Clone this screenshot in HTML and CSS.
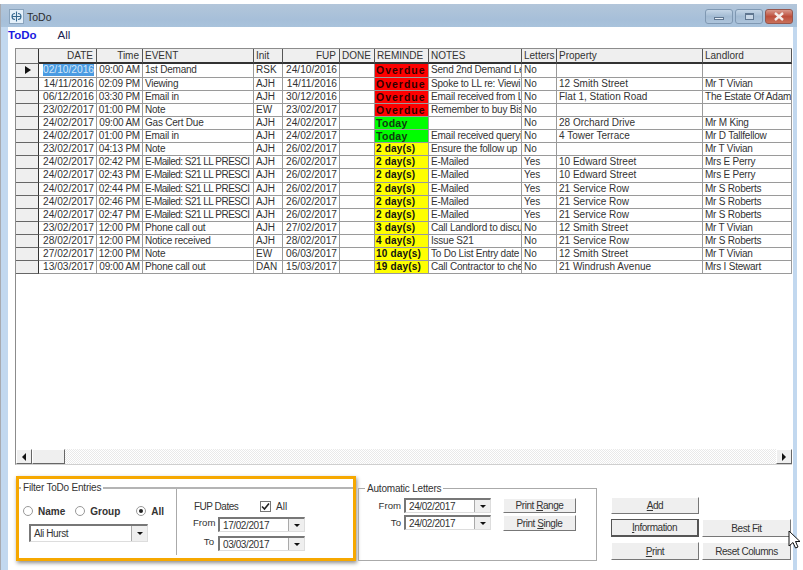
FILE: index.html
```html
<!DOCTYPE html>
<html lang="en">
<head>
  <meta charset="UTF-8" />
  <title>ToDo</title>
  <link rel="stylesheet" href="styles.css">
</head>
<body>
  <div class="window">
    <div class="titlebar">
      <div class="app-icon">
        <svg width="13" height="13" viewBox="0 0 13 13"><path d="M6.5 1.5v10M5 3.5a3 3 0 0 0 0 6M8 3.5a3 3 0 0 1 0 6M2 6.5h9" fill="none" stroke="#35688f" stroke-width="1.1"/></svg>
      </div>
      <span class="title">ToDo</span>
      <div class="win-buttons">
        <div class="win-btn"><span class="glyph-min"></span></div>
        <div class="win-btn"><span class="glyph-max"></span></div>
        <div class="win-btn close">
          <svg width="12" height="9" viewBox="0 0 12 9"><path d="M2 1l8 7M10 1 2 8" fill="none" stroke="#f4ece9" stroke-width="2.4"/></svg>
        </div>
      </div>
    </div>

    <div class="client">
      <div class="menu">
        <span class="menu-item active">ToDo</span>
        <span class="menu-item">All</span>
      </div>

      <div class="grid-wrap">
        <div class="grid" id="grid"></div>
        <div class="grid-spacer"></div>
        <div class="hscroll">
          <div class="sb-btn"><span class="arrow-left"></span></div>
          <div class="sb-thumb"></div>
          <div class="sb-track"></div>
          <div class="sb-btn"><span class="arrow-right"></span></div>
        </div>
      </div>

      <div class="bottom">
        <div class="filter-box">
          <fieldset class="group filter-group">
            <legend>Filter ToDo Entries</legend>
            <div class="filter-left">
              <div class="radios">
                <span class="radio"></span><b class="radio-label name">Name</b>
                <span class="radio"></span><b class="radio-label group-label">Group</b>
                <span class="radio checked"></span><b class="radio-label">All</b>
              </div>
              <div class="combo person"><span class="combo-text">Ali Hurst</span><span class="combo-btn"><i></i></span></div>
            </div>
            <div class="filter-right">
              <div class="fup-head">
                <span>FUP Dates</span>
                <span class="check">
                  <svg width="11" height="11" viewBox="0 0 11 11"><path d="M2 5.5 4.5 8 9 2.5" fill="none" stroke="#222" stroke-width="1.6"/></svg>
                </span>
                <span>All</span>
              </div>
              <div class="date-row"><label>From</label><div class="combo date"><span class="combo-text">17/02/2017</span><span class="combo-btn"><i></i></span></div></div>
              <div class="date-row"><label>To</label><div class="combo date"><span class="combo-text">03/03/2017</span><span class="combo-btn"><i></i></span></div></div>
            </div>
          </fieldset>
        </div>

        <fieldset class="group letters">
          <legend>Automatic Letters</legend>
          <div class="letters-rows">
            <div class="date-row"><label>From</label><div class="combo date"><span class="combo-text">24/02/2017</span><span class="combo-btn"><i></i></span></div></div>
            <button class="btn">Print <u>R</u>ange</button>
            <div class="date-row"><label>To</label><div class="combo date"><span class="combo-text">24/02/2017</span><span class="combo-btn"><i></i></span></div></div>
            <button class="btn">Print <u>S</u>ingle</button>
          </div>
        </fieldset>

        <div class="actions">
          <button class="btn"><u>A</u>dd</button>
          <span></span>
          <button class="btn default"><u>I</u>nformation</button>
          <button class="btn">Best Fit</button>
          <button class="btn"><u>P</u>rint</button>
          <button class="btn">Reset Columns</button>
        </div>
      </div>
    </div>
  </div>

  <svg class="cursor" width="13" height="20" viewBox="0 0 13 20"><path d="M1 1v15l4-3.5 2.5 5.5 2.5-1-2.500-5.500h4.500z" fill="#fff" stroke="#111" stroke-width="1"/></svg>

  <script>
    const rows = [
      ['02/10/2016','09:00 AM','1st Demand','RSK','24/10/2016','Overdue','r','Send 2nd Demand Le','No','',''],
      ['14/11/2016','02:09 PM','Viewing','AJH','14/11/2016','Overdue','r','Spoke to LL re: Viewi','No','12 Smith Street','Mr T Vivian'],
      ['06/12/2016','03:30 PM','Email in','AJH','30/12/2016','Overdue','r','Email received from L','No','Flat 1, Station Road','The Estate Of Adam'],
      ['23/02/2017','01:00 PM','Note','EW','23/02/2017','Overdue','r','Remember to buy Bis','No','',''],
      ['24/02/2017','09:00 AM','Gas Cert Due','AJH','24/02/2017','Today','g','','No','28 Orchard Drive','Mr M King'],
      ['24/02/2017','01:00 PM','Email in','AJH','24/02/2017','Today','g','Email received queryi','No','4 Tower Terrace','Mr D Tallfellow'],
      ['23/02/2017','04:13 PM','Note','AJH','26/02/2017','2 day(s)','y','Ensure the follow up','No','','Mr T Vivian'],
      ['24/02/2017','02:42 PM','E-Mailed: S21 LL PRESCI','AJH','26/02/2017','2 day(s)','y','E-Mailed','Yes','10 Edward Street','Mrs E Perry'],
      ['24/02/2017','02:43 PM','E-Mailed: S21 LL PRESCI','AJH','26/02/2017','2 day(s)','y','E-Mailed','Yes','10 Edward Street','Mrs E Perry'],
      ['24/02/2017','02:44 PM','E-Mailed: S21 LL PRESCI','AJH','26/02/2017','2 day(s)','y','E-Mailed','Yes','21 Service Row','Mr S Roberts'],
      ['24/02/2017','02:46 PM','E-Mailed: S21 LL PRESCI','AJH','26/02/2017','2 day(s)','y','E-Mailed','Yes','21 Service Row','Mr S Roberts'],
      ['24/02/2017','02:47 PM','E-Mailed: S21 LL PRESCI','AJH','26/02/2017','2 day(s)','y','E-Mailed','Yes','21 Service Row','Mr S Roberts'],
      ['23/02/2017','12:00 PM','Phone call out','AJH','27/02/2017','3 day(s)','y','Call Landlord to discu','No','12 Smith Street','Mr T Vivian'],
      ['28/02/2017','12:00 PM','Notice received','AJH','28/02/2017','4 day(s)','y','Issue S21','No','21 Service Row','Mr S Roberts'],
      ['27/02/2017','12:00 PM','Note','EW','06/03/2017','10 day(s)','y','To Do List Entry date','No','12 Smith Street','Mr T Vivian'],
      ['13/03/2017','09:00 AM','Phone call out','DAN','15/03/2017','19 day(s)','y','Call Contractor to che','No','21 Windrush Avenue','Mrs I Stewart']
    ];
    const headers = ['', 'DATE', 'Time', 'EVENT', 'Init', 'FUP', 'DONE', 'REMINDE', 'NOTES', 'Letters', 'Property', 'Landlord'];

    function cell(text, cls) {
      return `<div class="cell ${cls}"><span>${text}</span></div>`;
    }

    let html = '';
    headers.forEach((h, i) => {
      const right = (i === 1 || i === 2 || i === 5) ? ' right' : '';
      html += cell(h, 'head' + right + (i === 0 ? ' ind' : ''));
    });
    rows.forEach((r, i) => {
      html += `<div class="cell ind">${i === 0 ? '<span class="pointer"></span>' : ''}</div>`;
      html += cell(r[0], 'date right' + (i === 0 ? ' selected' : ''));
      html += cell(r[1], 'time right');
      html += cell(r[2], 'event' + (r[2].startsWith('E-Mailed') ? ' tight' : ''));
      html += cell(r[3], '');
      html += cell(r[4], 'date right');
      html += cell('', '');
      html += cell(r[5], 'remind ' + r[6]);
      html += cell(r[7], 'notes');
      html += cell(r[8], '');
      html += cell(r[9], '');
      html += cell(r[10], 'landlord');
    });
    document.getElementById('grid').innerHTML = html;
  </script>
</body>
</html>
```

FILE: styles.css
```css
html, body {
  margin: 0;
  padding: 0;
  background: #fff;
}
body {
  font-family: "Liberation Sans", Arial, sans-serif;
  font-size: 10px;
  color: #333;
  width: 803px;
  height: 570px;
  overflow: hidden;
  position: relative;
}
.window {
  margin-top: 4px;
  width: 797px;
  height: 566px;
  display: flex;
  flex-direction: column;
  background: #c2d8ef;
  border-left: 1px solid #a8aab0;
  box-sizing: border-box;
}
.titlebar {
  height: 23px;
  display: flex;
  align-items: center;
  padding: 2px 0 0 8px;
  box-sizing: border-box;
  background: linear-gradient(#b3c6da, #a6bfd9 70%, #a9c3dc);
  flex: none;
}
.app-icon {
  width: 15px;
  height: 15px;
  box-sizing: border-box;
  background: #e4f0fa;
  border: 1px solid #8aa4bd;
  margin-right: 3px;
  display: flex;
}
.title {
  font-size: 10.5px;
  color: #2c2c2c;
}
.win-buttons {
  margin-left: auto;
  margin-right: 4px;
  display: flex;
  gap: 2px;
}
.win-btn {
  width: 28px;
  height: 15px;
  box-sizing: border-box;
  border: 1px solid #7f98b2;
  border-radius: 3px;
  background: linear-gradient(#c5d6e7, #a3bbd3 50%, #adc4db);
  display: flex;
  align-items: center;
  justify-content: center;
}
.win-btn.close {
  background: linear-gradient(#d8998c, #bd4f3c 50%, #c8705a);
  border-color: #96554b;
}
.glyph-min {
  width: 10px;
  height: 3px;
  margin-top: 4px;
  background: #e6eef6;
  border: 1px solid #5f7690;
  box-sizing: border-box;
}
.glyph-max {
  width: 9px;
  height: 7px;
  border: 1px solid #5f7690;
  border-top-width: 2px;
  box-sizing: border-box;
  background: #c9d8e8;
}
.client {
  flex: 1;
  margin: 0 4px 0 7px;
  background: #fff;
  display: flex;
  flex-direction: column;
}
.menu {
  height: 21px;
  padding-bottom: 6px;
  box-sizing: border-box;
  display: flex;
  align-items: center;
  gap: 21px;
  font-size: 11.5px;
}
.menu-item {
  color: #222250;
}
.menu-item.active {
  color: #1a1ae0;
  font-weight: bold;
}
.grid-wrap {
  margin: 0 1px 0 7px;
  height: 417px;
  display: flex;
  flex-direction: column;
  background: #fff;
  border: 1px solid #8c8c8c;
  border-right: 0;
  border-bottom: 1px solid #cfcfcf;
  box-sizing: border-box;
}
.grid {
  display: grid;
  grid-template-columns: 23px 58px 46px 111px 29px 57px 35px 54px 93px 35px 146px 89px;
  grid-template-rows: 15.4px;
  grid-auto-rows: 13.13px;
  background: #fff;
}
.grid-spacer {
  flex: 1;
  background: #fff;
}
.cell {
  border-right: 1px solid #9a9a9a;
  border-bottom: 1px solid #9a9a9a;
  box-sizing: border-box;
  padding: 0 1px 0 2px;
  overflow: hidden;
  white-space: nowrap;
  line-height: 12px;
  background: #fff;
  display: flex;
  align-items: center;
}
.cell span {
  flex: none;
}
.cell.head {
  background: #efefef;
  border-bottom: 2px solid #333;
  border-right: 1px solid #555;
}
.cell.right {
  justify-content: flex-end;
  padding-right: 2px;
}
.cell.head.right {
  padding-right: 3px;
}
.cell.date {
  font-size: 10.2px;
}
.cell.time {
  letter-spacing: -0.2px;
}
.cell.notes, .cell.landlord, .cell.event {
  letter-spacing: -0.22px;
}
.cell.tight {
  letter-spacing: -0.52px;
}
.cell.ind {
  background: #efefef;
  border-right: 1px solid #333;
  border-bottom: 1px solid #666;
  justify-content: center;
}
.cell.selected span {
  background: #4a9be2;
  color: #d4e7f8;
}
.pointer {
  width: 0;
  height: 0;
  border-left: 6px solid #111;
  border-top: 4px solid transparent;
  border-bottom: 4px solid transparent;
}
.cell.remind {
  font-weight: bold;
  letter-spacing: 0.2px;
  color: #111;
  padding-left: 1px;
}
.cell.r {
  background: #fe0000;
  color: #300000;
  font-size: 10.5px;
  letter-spacing: 1px;
}
.cell.g {
  background: #00fe00;
  color: #103a10;
  font-size: 10.5px;
  letter-spacing: 0.3px;
}
.cell.y {
  background: #ffff00;
}
.hscroll {
  height: 15px;
  flex: none;
  display: flex;
  background: #f2f2f2;
}
.sb-btn, .sb-thumb {
  background: #efefef;
  border: 1px solid #fff;
  border-right-color: #666;
  border-bottom-color: #666;
  box-sizing: border-box;
  display: flex;
  align-items: center;
  justify-content: center;
}
.sb-btn { width: 16px; }
.sb-thumb { width: 33px; }
.sb-track {
  flex: 1;
  background: repeating-conic-gradient(#fff 0 25%, #e9e9e9 0 50%) 0 0 / 2px 2px;
}
.arrow-left {
  border-right: 4px solid #111;
  border-top: 4px solid transparent;
  border-bottom: 4px solid transparent;
}
.arrow-right {
  border-left: 4px solid #111;
  border-top: 4px solid transparent;
  border-bottom: 4px solid transparent;
}
.bottom {
  display: flex;
  align-items: flex-start;
  padding: 11px 0 0 8px;
}
.filter-box {
  width: 340px;
  height: 85px;
  border: 3px solid #f6a800;
  box-sizing: border-box;
  box-shadow: 1px 2px 4px rgba(0, 0, 0, 0.45);
  flex: none;
  padding-top: 3px;
}
.group {
  border: 1px solid #b4b4b4;
  margin: 0;
  padding: 0;
  min-width: 0;
  box-sizing: border-box;
}
.group legend {
  padding: 0 2px;
  margin-left: 2px;
  letter-spacing: -0.2px;
}
.filter-group {
  border-width: 2px 0 0 0;
  display: flex;
  height: 74px;
}
.filter-left {
  width: 158px;
  border-right: 1px solid #aaa;
  margin-top: -4px;
  padding-top: 15px;
  flex: none;
  height: 66px;
  box-sizing: border-box;
}
.radios {
  display: flex;
  align-items: center;
  padding-left: 4px;
  height: 14px;
}
.radio {
  width: 10px;
  height: 10px;
  box-sizing: border-box;
  border-radius: 50%;
  border: 1px solid #999;
  background: #fff;
  position: relative;
  margin-right: 5px;
  flex: none;
}
.radio.checked::after {
  content: "";
  position: absolute;
  left: 2px;
  top: 2px;
  width: 4px;
  height: 4px;
  border-radius: 50%;
  background: #222;
}
.radio-label.name { margin-right: 10px; }
.radio-label.group-label { margin-right: 16px; }
.combo {
  display: flex;
  align-items: center;
  border: 1px solid #ddd;
  border-top: 2px solid #777;
  border-left: 2px solid #777;
  box-sizing: border-box;
  background: #fff;
  letter-spacing: -0.4px;
}
.combo-text {
  flex: 1;
  padding-left: 3px;
  white-space: nowrap;
}
.combo-btn {
  width: 15px;
  align-self: stretch;
  background: #efefef;
  border-left: 1px solid #aaa;
  display: flex;
  align-items: center;
  justify-content: center;
}
.combo-btn i {
  border-top: 3px solid #111;
  border-left: 3.5px solid transparent;
  border-right: 3.5px solid transparent;
}
.combo.person {
  width: 119px;
  height: 18px;
  margin: 6px 0 0 10px;
}
.filter-right {
  padding: 6px 0 0 16px;
  flex: 1;
}
.fup-head {
  display: flex;
  align-items: center;
  height: 14px;
  padding-left: 1px;
}
.fup-head span:first-child {
  width: 66px;
  letter-spacing: -0.5px;
}
.check {
  width: 11px;
  height: 11px;
  border: 1px solid #777;
  box-sizing: border-box;
  margin-right: 5px;
  display: flex;
  align-items: center;
  justify-content: center;
}
.check svg {
  flex: none;
}
.date-row {
  display: flex;
  align-items: center;
  justify-content: flex-end;
  height: 15px;
  gap: 3px;
}
.date-row label {
  white-space: nowrap;
  font-size: 9.6px;
}
.date-row .combo {
  width: 87px;
  height: 15px;
}
.filter-right .date-row {
  margin-top: 4px;
  justify-content: flex-start;
  gap: 4px;
}
.filter-right .date-row label {
  width: 21px;
  text-align: right;
  margin-top: -5px;
}
.letters {
  width: 239px;
  height: 78px;
  margin-left: 2px;
  margin-top: 7px;
  flex: none;
  border-color: #aaa;
}
.letters legend {
  margin-left: 6px;
}
.letters-rows {
  display: grid;
  grid-template-columns: 132px 73px;
  grid-template-rows: 15px 16px;
  column-gap: 12px;
  row-gap: 2px;
  margin-top: 4px;
}
.btn {
  font-family: "Liberation Sans", Arial, sans-serif;
  font-size: 10px;
  letter-spacing: -0.45px;
  color: #333;
  background: #efefef;
  border: 1px solid #fff;
  border-right-color: #777;
  border-bottom-color: #777;
  padding: 0;
  box-sizing: border-box;
  white-space: nowrap;
}
.btn.default {
  border: 1px solid #555;
  border-right-width: 2px;
  border-bottom-width: 2px;
}
.actions {
  display: grid;
  grid-template-columns: 88px 89px;
  grid-template-rows: 17px 18px 18px;
  column-gap: 3px;
  row-gap: 5px;
  margin-left: 14px;
  margin-top: 21px;
  flex: none;
}
.cursor {
  position: absolute;
  left: 788px;
  top: 530px;
}
```
